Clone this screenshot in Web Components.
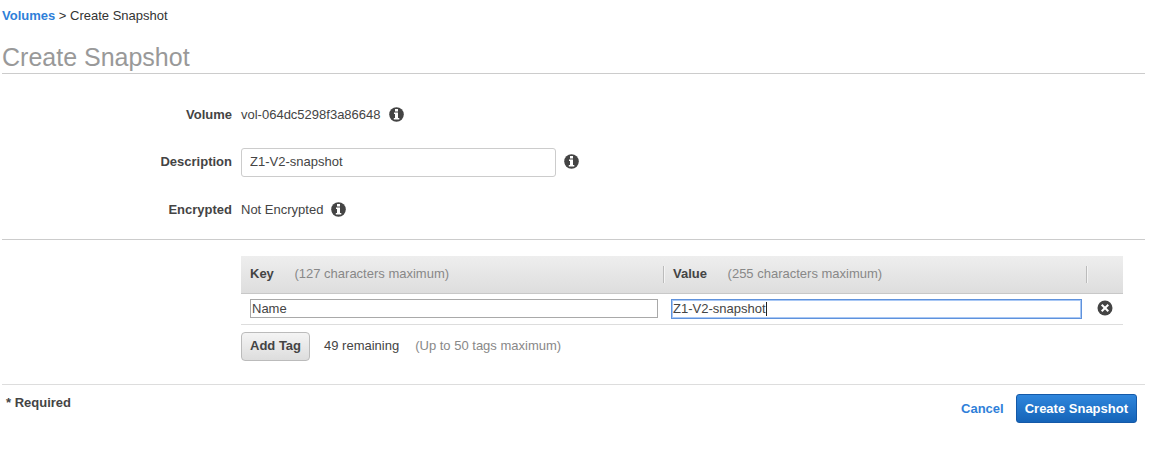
<!DOCTYPE html>
<html lang="en">
<head>
<meta charset="utf-8">
<title>Create Snapshot</title>
<style>
  body {
    margin: 0;
    background: #fff;
    color: #444;
    font: 13px/18px "Liberation Sans", Arial, Helvetica, sans-serif;
    --link: #2f7fd9;
    --muted: #888;
    --rule: #ccc;
    --indent: 239px;
  }
</style>
</head>
<body>
<snapshot-page></snapshot-page>

<script>
class BaseElement extends HTMLElement {
  constructor() {
    super();
    this.attachShadow({ mode: 'open' }).innerHTML =
      '<style>*{box-sizing:border-box}</style>' + this.render();
  }
  render() { return '<slot></slot>'; }
}

customElements.define('info-icon', class extends BaseElement {
  render() {
    return `<style>
      :host { display: inline-flex; flex: none; padding-bottom: 2px; }
      svg { display: block; }
    </style>
    <svg width="15" height="15" viewBox="0 0 15 15" role="img" aria-label="Information">
      <circle cx="7.5" cy="7.5" r="7.3" fill="#444"/>
      <path fill="#fff" d="M6 2h3v2.5H6zM5 5.5h4v5.5h1.3v1.6H4.8V11H6V7H5z"/>
    </svg>`;
  }
});

customElements.define('page-heading', class extends BaseElement {
  render() {
    return `<style>
      :host { display: block; border-bottom: 1px solid var(--rule); }
      nav { padding-top: 7px; color: #333; }
      a { color: var(--link); font-weight: bold; text-decoration: none; }
      h1 { margin: 0; padding: 17px 0 0; font-size: 25px; line-height: 31px; font-weight: normal; color: #999; }
    </style>
    <nav><a href="#">Volumes</a> &gt; Create Snapshot</nav>
    <h1><slot></slot></h1>`;
  }
});

customElements.define('form-row', class extends BaseElement {
  render() {
    return `<style>
      :host { display: grid; grid-template-columns: calc(var(--indent) - 9px) 1fr; column-gap: 9px; align-items: baseline; min-height: 18px; }
      .label { text-align: right; font-weight: bold; }
      .value { display: flex; align-items: center; gap: 8px; }
    </style>
    <div class="label"><slot name="label"></slot></div>
    <div class="value"><slot></slot><info-icon></info-icon></div>`;
  }
});

customElements.define('snapshot-details', class extends BaseElement {
  render() {
    return `<style>
      :host { display: flex; flex-direction: column; gap: 24px; padding: 32px 0 20px; border-bottom: 1px solid var(--rule); }
      input { width: 315px; height: 29px; padding: 0 8px 2px; border: 1px solid #ccc; border-radius: 3px; font: inherit; color: inherit; background: #fff; outline: 0; }
    </style>
    <form-row><span slot="label">Volume</span><span>vol-064dc5298f3a86648</span></form-row>
    <form-row><label slot="label" for="description">Description</label><input id="description" type="text" value="Z1-V2-snapshot"></form-row>
    <form-row><span slot="label">Encrypted</span><span>Not Encrypted</span></form-row>`;
  }
});

customElements.define('tag-editor', class extends BaseElement {
  render() {
    return `<style>
      :host { display: block; margin: 16px 22px 0 var(--indent); }
      table { width: 100%; table-layout: fixed; border-collapse: separate; border-spacing: 0; }
      .action { width: 36px; }
      thead { background: linear-gradient(#eee, #ddd); }
      th { height: 38px; padding: 0 0 2px 9px; text-align: left; border-bottom: 1px solid #c8c8c8; position: relative; }
      th + th::before { content: ""; position: absolute; left: -1px; top: 10px; height: 17px; border-left: 1px solid #bbb; border-right: 1px solid #f4f4f4; }
      .hint { font-weight: normal; color: var(--muted); }
      th .hint { margin-left: 17px; }
      td { height: 31px; padding: 0 6px 1px 9px; border-bottom: 1px solid #ddd; vertical-align: middle; }
      td + td { padding: 0 5px 1px 8px; }
      .box { position: relative; display: block; }
      td input { display: block; width: 100%; height: 19px; padding: 0 1px; border: 1px solid #a9a9a9; font: inherit; color: inherit; background: #fff; outline: 0; }
      .active { margin-left: -1px; }
      .active input { height: 20px; border-color: #5f92dc; box-shadow: inset 0 0 0 1px #a9c8f5; }
      .active::after { content: ""; position: absolute; left: 95px; top: 3px; height: 14px; border-left: 1px solid #222; }
      td.action { padding: 0 0 2px 10px; }
      .remove { display: block; padding: 0; border: 0; background: none; }
      svg { display: block; }
      .below { display: flex; align-items: center; margin-top: 7px; gap: 14px; }
      .add { height: 29px; padding: 0 8px 2px; border: 1px solid #bbb; border-radius: 4px; background: linear-gradient(#f4f4f4, #ddd); font: inherit; font-weight: bold; color: inherit; }
      .below span { padding-bottom: 2px; }
      .below .hint { margin-left: 2px; }
    </style>
    <table>
      <thead><tr>
        <th scope="col">Key <span class="hint">(127 characters maximum)</span></th>
        <th scope="col">Value <span class="hint">(255 characters maximum)</span></th>
        <th class="action" aria-label="Remove"></th>
      </tr></thead>
      <tbody><tr>
        <td><label class="box"><input type="text" aria-label="Key" value="Name"></label></td>
        <td><label class="box active"><input type="text" aria-label="Value" value="Z1-V2-snapshot"></label></td>
        <td class="action"><button class="remove" type="button" aria-label="Remove tag">
          <svg width="16" height="16" viewBox="0 0 16 16"><circle cx="8" cy="8" r="7.5" fill="#444"/><path d="M4.7 4.7l6.6 6.6M11.3 4.7l-6.6 6.6" stroke="#fff" stroke-width="2"/></svg>
        </button></td>
      </tr></tbody>
    </table>
    <div class="below">
      <button class="add" type="button">Add Tag</button>
      <span>49 remaining</span>
      <span class="hint">(Up to 50 tags maximum)</span>
    </div>`;
  }
});

customElements.define('page-footer', class extends BaseElement {
  render() {
    return `<style>
      :host { display: flex; justify-content: space-between; align-items: flex-start; margin-top: 23px; padding: 9px 8px 0 4px; border-top: 1px solid #ddd; font-weight: bold; }
      .actions { display: flex; align-items: center; gap: 12px; }
      a { color: var(--link); text-decoration: none; }
      button { height: 29px; padding: 0 8px; border: 1px solid #1459a8; border-radius: 3px; background: linear-gradient(#2f86dc, #1564b8); color: #fff; font: inherit; }
    </style>
    <span>* Required</span>
    <div class="actions"><a href="#">Cancel</a><button type="submit">Create Snapshot</button></div>`;
  }
});

customElements.define('snapshot-page', class extends BaseElement {
  render() {
    return `<style>:host { display: block; padding: 0 5px 0 2px; }</style>
    <page-heading>Create Snapshot</page-heading>
    <main>
      <snapshot-details></snapshot-details>
      <tag-editor></tag-editor>
    </main>
    <page-footer></page-footer>`;
  }
});
</script>
</body>
</html>
